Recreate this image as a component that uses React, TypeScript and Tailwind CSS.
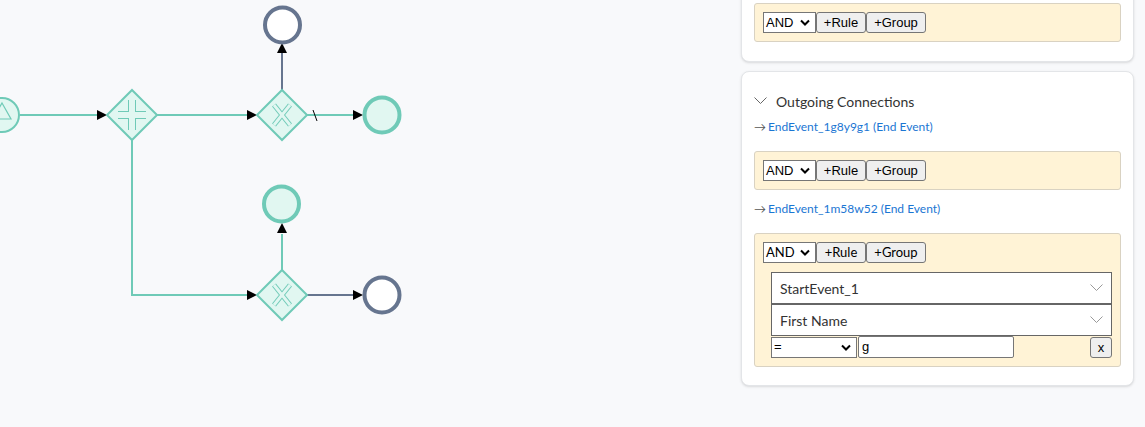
import React from "react";

const TEAL = "#6fcab7";
const TEAL_FILL = "#e1f7f1";
const GRAY = "#66758f";

function ArrowRight({ x, y }: { x: number; y: number }) {
  return <polygon points={`${x - 10},${y - 5} ${x},${y} ${x - 10},${y + 5}`} fill="#000" />;
}

function ArrowUp({ x, y }: { x: number; y: number }) {
  return <polygon points={`${x - 5},${y + 10} ${x},${y} ${x + 5},${y + 10}`} fill="#000" />;
}

function Diamond({ cx, cy }: { cx: number; cy: number }) {
  return (
    <polygon
      points={`${cx},${cy - 25} ${cx + 25},${cy} ${cx},${cy + 25} ${cx - 25},${cy}`}
      fill={TEAL_FILL}
      stroke={TEAL}
      strokeWidth={2}
    />
  );
}

function ExclusiveGateway({ cx, cy }: { cx: number; cy: number }) {
  const a = `M${cx - 8} ${cy - 10} L${cx + 8} ${cy + 10}`;
  const b = `M${cx + 8} ${cy - 10} L${cx - 8} ${cy + 10}`;
  return (
    <g>
      <Diamond cx={cx} cy={cy} />
      <path d={a} stroke={TEAL} strokeWidth={5} />
      <path d={b} stroke={TEAL} strokeWidth={5} />
      <path d={a} stroke={TEAL_FILL} strokeWidth={3} />
      <path d={b} stroke={TEAL_FILL} strokeWidth={3} />
    </g>
  );
}

function ParallelGateway({ cx, cy }: { cx: number; cy: number }) {
  const h = `M${cx - 14} ${cy} L${cx + 14} ${cy}`;
  const v = `M${cx} ${cy - 15} L${cx} ${cy + 15}`;
  return (
    <g>
      <Diamond cx={cx} cy={cy} />
      <path d={h} stroke={TEAL} strokeWidth={8} />
      <path d={v} stroke={TEAL} strokeWidth={8} />
      <path d={h} stroke={TEAL_FILL} strokeWidth={6} />
      <path d={v} stroke={TEAL_FILL} strokeWidth={6} />
    </g>
  );
}

function Diagram() {
  return (
    <svg width={741} height={427} className="shrink-0 block">
      {/* flows */}
      <path d="M20 115 L97 115" stroke={TEAL} strokeWidth={2} fill="none" />
      <path d="M157 115 L247 115" stroke={TEAL} strokeWidth={2} fill="none" />
      <path d="M282 90 L282 53" stroke={GRAY} strokeWidth={2} fill="none" />
      <path d="M307 115 L353 115" stroke={TEAL} strokeWidth={2} fill="none" />
      <path d="M313 110 L317 121" stroke="#000" strokeWidth={1} />
      <path d="M132 140 L132 295 L247 295" stroke={TEAL} strokeWidth={2} fill="none" />
      <path d="M282 270 L282 234" stroke={TEAL} strokeWidth={2} fill="none" />
      <path d="M307 295 L353 295" stroke={GRAY} strokeWidth={2} fill="none" />

      <ArrowRight x={107} y={115} />
      <ArrowRight x={257} y={115} />
      <ArrowUp x={282} y={43} />
      <ArrowRight x={363} y={115} />
      <ArrowRight x={257} y={295} />
      <ArrowUp x={282} y={223} />
      <ArrowRight x={363} y={295} />

      {/* start event */}
      <circle cx={2} cy={115} r={17} fill={TEAL_FILL} stroke={TEAL} strokeWidth={2} />
      <polygon points="2,103 11,119 -7,119" fill="none" stroke={TEAL} strokeWidth={1.2} />

      <ParallelGateway cx={132} cy={115} />
      <ExclusiveGateway cx={282} cy={115} />
      <ExclusiveGateway cx={282} cy={295} />

      {/* end events */}
      <circle cx={282.5} cy={25} r={17.5} fill="#fff" stroke={GRAY} strokeWidth={4} />
      <circle cx={382} cy={115} r={17.5} fill={TEAL_FILL} stroke={TEAL} strokeWidth={4} />
      <circle cx={281.5} cy={204} r={17.5} fill={TEAL_FILL} stroke={TEAL} strokeWidth={4} />
      <circle cx={382} cy={295} r={17.5} fill="#fff" stroke={GRAY} strokeWidth={4} />
    </svg>
  );
}

function NativeChevron() {
  return (
    <svg width="10" height="7" viewBox="0 0 10 7" className="shrink-0">
      <path d="M1 1.5 L5 5.5 L9 1.5" stroke="#000" strokeWidth={2} fill="none" />
    </svg>
  );
}

function ThinChevron({ color = "#999" }: { color?: string }) {
  return (
    <svg width="13" height="8" viewBox="0 0 13 8" className="shrink-0">
      <path d="M0.5 0.5 L6.5 6.5 L12.5 0.5" stroke={color} strokeWidth={1} fill="none" />
    </svg>
  );
}

function NativeSelect({ value, width }: { value: string; width: string }) {
  return (
    <div
      className={`flex h-[21px] ${width} items-center justify-between border border-[#767676] bg-white pl-[2px] pr-[5px] text-[13px] text-black`}
    >
      <span>{value}</span>
      <NativeChevron />
    </div>
  );
}

function Btn({ children, className = "" }: { children: React.ReactNode; className?: string }) {
  return (
    <button
      className={`h-[21px] rounded-[3px] border border-[#767676] bg-[#efefef] px-0 text-center text-[13px] leading-none text-black ${className}`}
    >
      {children}
    </button>
  );
}

function GroupBar() {
  return (
    <div className="flex items-center">
      <NativeSelect value="AND" width="w-[53px]" />
      <Btn className="w-[50px]">+Rule</Btn>
      <Btn className="w-[60px]">+Group</Btn>
    </div>
  );
}

function RuleBox({ children }: { children?: React.ReactNode }) {
  return (
    <div className="rounded-[3px] border border-[#d9d2c2] bg-[#fff3d6] px-2 pt-2 pb-2">
      <GroupBar />
      {children}
    </div>
  );
}

function FieldSelect({ label }: { label: string }) {
  return (
    <div className="flex h-[32px] items-center justify-between border border-[#666] bg-white pl-2 pr-2 text-[14px] text-[#333]">
      <span>{label}</span>
      <ThinChevron />
    </div>
  );
}

function ConnectionLink({ target }: { target: string }) {
  return (
    <div className="flex h-4 items-center text-[12px]">
      <span className="text-[#555]">→</span>
      <span className="ml-[2px] text-[#1b76d3]">{target} (End Event)</span>
    </div>
  );
}

export default function App() {
  return (
    <div
      className="flex h-[427px] w-full overflow-hidden bg-[#f8f9fb]"
      style={{ fontFamily: "Lato, 'Noto Sans', sans-serif" }}
    >
      <Diagram />
      <div className="flex w-[393px] shrink-0 flex-col gap-[9px] -mt-[10px]" style={{ fontFamily: "Lato, sans-serif" }}>
        <div className="rounded-lg border border-[#e3e5e8] bg-white px-3 pt-3 pb-[19px] shadow-sm">
          <div style={{ fontFamily: "'Liberation Sans', Arial, sans-serif" }}>
            <RuleBox />
          </div>
        </div>

        <div className="rounded-lg border border-[#e3e5e8] bg-white px-3 pt-[19px] pb-[18px] shadow-sm">
          <div className="flex h-5 items-center gap-[9px] text-[14px] text-[#333]">
            <ThinChevron color="#666" />
            <span>Outgoing Connections</span>
          </div>
          <div className="mt-2">
            <ConnectionLink target="EndEvent_1g8y9g1" />
          </div>
          <div className="mt-4" style={{ fontFamily: "'Liberation Sans', Arial, sans-serif" }}>
            <RuleBox />
          </div>
          <div className="mt-[11px]">
            <ConnectionLink target="EndEvent_1m58w52" />
          </div>
          <div className="mt-4">
            <RuleBox>
              <div className="ml-2 mt-[9px]">
                <FieldSelect label="StartEvent_1" />
                <FieldSelect label="First Name" />
                <div className="flex items-center" style={{ fontFamily: "'Liberation Sans', Arial, sans-serif" }}>
                  <NativeSelect value="=" width="w-[86px]" />
                  <div className="ml-px flex h-[22px] w-[156px] items-center rounded-[2px] border border-[#767676] bg-white pl-[3px] text-[13px] text-black">
                    g
                  </div>
                  <Btn className="ml-auto w-[22px]">x</Btn>
                </div>
              </div>
            </RuleBox>
          </div>
        </div>
      </div>
    </div>
  );
}
